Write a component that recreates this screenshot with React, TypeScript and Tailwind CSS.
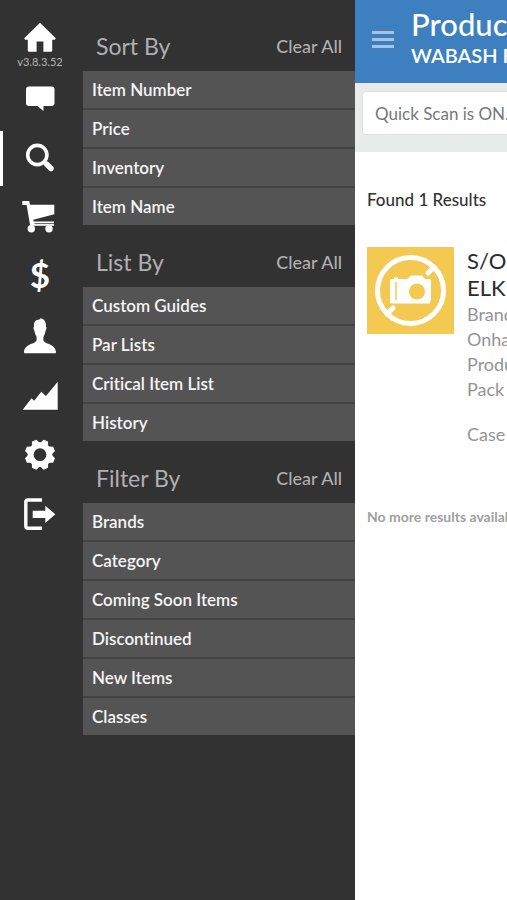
import { useState } from "react";
import type { ReactNode } from "react";

type Secao = {
  titulo: string;
  itens: string[];
}

type ItemMenu = {
  nome: string;
  desenho: ReactNode;
}

const secoes: Secao[] = [
  { titulo: "Sort By", itens: ["Item Number", "Price", "Inventory", "Item Name"] },
  { titulo: "List By", itens: ["Custom Guides", "Par Lists", "Critical Item List", "History"] },
  { titulo: "Filter By", itens: ["Brands", "Category", "Coming Soon Items", "Discontinued", "New Items", "Classes"] },
];

const dentes = [22.5, 67.5, 112.5, 157.5, 202.5, 247.5, 292.5, 337.5];

const menu: ItemMenu[] = [
  {
    nome: "Messages",
    desenho: (
      <>
        <rect x="8" y="17.5" width="28.5" height="19.5" rx="3" />
        <path d="M18.5 36 L20 37.5 L25.5 42 V36 Z" />
      </>
    ),
  },
  {
    nome: "Search",
    desenho: (
      <>
        <circle cx="19.3" cy="26" r="9.6" fill="none" stroke="currentColor" strokeWidth="3.6" />
        <path d="M26 33 L28.5 35.5" stroke="currentColor" strokeWidth="3.6" />
        <path d="M28.5 35 L33 39.5" stroke="currentColor" strokeWidth="5.4" strokeLinecap="round" />
      </>
    ),
  },
  {
    nome: "Cart",
    desenho: (
      <>
        <path d="M4.3 13 H11.2 L12 16.7 H36.3 V26.3 L15.3 31.7 L15.6 33.6 H36 V37.8 H12.2 L8.6 17 H4.3 Z" />
        <path d="M16.5 35.6 H36" stroke="#323232" strokeWidth="0.8" />
        <circle cx="13.3" cy="40.8" r="3.7" />
        <circle cx="31" cy="40.8" r="3.7" />
      </>
    ),
  },
  {
    nome: "Pricing",
    desenho: (
      <text x="22" y="41" textAnchor="middle" fontSize="35" fontWeight="700">$</text>
    ),
  },
  {
    nome: "Customer",
    desenho: (
      <path d="M22.8 12.3 C26.6 13.4 28.2 16 28 20.5 C28.8 21 28.6 23.5 27.6 24.5 C27.2 27.5 26.2 29.5 25.4 31 V34.2 C26.8 38.4 37.8 37.6 38 46.3 Q38 47.3 37 47.3 H7 Q6 47.3 6 46.3 C6.2 37.6 17.2 38.4 18.6 34.2 V31 C17.8 29.5 16.8 27.5 16.4 24.5 C15.4 23.5 15.2 21 16 20.5 C15.8 16 17.6 13.8 21.4 13.6 Z" />
    ),
  },
  {
    nome: "Reports",
    desenho: (
      <path d="M4.7 44.7 L13.5 33.3 L16.2 35.8 L23.3 26.8 L28 31 L39.7 16.7 V44.7 Z" />
    ),
  },
  {
    nome: "Settings",
    desenho: (
      <g transform="translate(22 30.7)">
        <circle r="9.4" fill="none" stroke="currentColor" strokeWidth="6" />
        {dentes.map((d) => (
          <path key={d} d="M-4.2 -11 L-2.4 -15.2 H2.4 L4.2 -11 Z" transform={`rotate(${d})`} />
        ))}
      </g>
    ),
  },
  {
    nome: "Log out",
    desenho: (
      <>
        <path d="M24 17 H10 Q7.8 17 7.8 19.2 V43 Q7.8 45.2 10 45.2 H24" fill="none" stroke="currentColor" strokeWidth="3.4" />
        <path d="M14.7 27.7 H27.3 V22.7 L37.3 31.3 L27.3 40 V35 H14.7 Z" />
      </>
    ),
  },
];

function BarraLateral() {
  const [ativo, setAtivo] = useState("Search");

  return (
    <nav className="w-20 shrink-0 pt-4 text-white">
      <button type="button" aria-label="Home" className="block w-full">
        <svg className="w-11 h-9 mx-auto" viewBox="0 0 44 36" fill="currentColor">
          <path d="M22 6.8 L37.8 22.2 L36.8 23.8 H34.2 V34.5 Q34.2 35.8 33 35.8 H25.4 V25.4 H18.6 V35.8 H11 Q9.8 35.8 9.8 34.5 V23.8 H7.2 L6.2 22.2 Z" />
        </svg>
      </button>
      <p className="mt-[3px] text-center text-[11px] leading-[14px] text-[#b4b4b4]">v3.8.3.52</p>

      {menu.map((item) => (
        <button
          key={item.nome}
          type="button"
          aria-label={item.nome}
          onClick={() => setAtivo(item.nome)}
          className={item.nome === ativo ? "flex items-center w-full h-[60px]" : "flex items-center w-full h-[59px]"}>
          <span className={item.nome === ativo ? "w-[3px] h-[55px] bg-white" : "w-[3px] h-[55px]"}></span>
          <svg className="w-11 h-[59px] ml-[15px]" viewBox="0 0 44 59" fill="currentColor">
            {item.desenho}
          </svg>
        </button>
      ))}
    </nav>
  )
}

function Filtros() {
  return (
    <aside className="flex-1 pt-[9px] pl-[3px]">
      {secoes.map((secao) => (
        <section key={secao.titulo}>
          <div className="flex items-center justify-between h-[62px] pt-3 px-[13px] text-[#b0b0b0]">
            <h2 className="text-[23px]">{secao.titulo}</h2>
            <button type="button" className="text-lg font-medium">Clear All</button>
          </div>

          <ul className="flex flex-col gap-[2px] bg-[#424242]">
            {secao.itens.map((item) => (
              <li key={item}>
                <button type="button" className="block w-full h-[37px] pl-[9px] text-left text-[17px] font-semibold text-[#f5f5f5] bg-[#545454]">
                  {item}
                </button>
              </li>
            ))}
          </ul>
        </section>
      ))}
    </aside>
  )
}

function SemFoto() {
  return (
    <svg className="w-[87px] h-[87px] shrink-0 bg-[#f4c951]" viewBox="0 0 87 87">
      <circle cx="43.5" cy="43.5" r="33" fill="none" stroke="#fff" strokeWidth="5" />
      <path d="M20 67 L26 61 M61 26 L67 20" stroke="#fff" strokeWidth="5" strokeLinecap="round" />
      <path d="M23 33.5 Q23 32 24.5 32 H27 V30.5 H31 V32 H40 L44 28.5 H55 L58 32 H62.5 Q64 32 64 33.5 V52 Q64 53.5 62.5 56.5 H24.5 Q23 56.5 23 55 Z" fill="#fff" />
      <path d="M29 35 V53" stroke="#f4c951" strokeWidth="1.5" />
      <circle cx="50" cy="44.5" r="8" fill="#f4c951" />
    </svg>
  )
}

function Produtos() {
  const [busca, setBusca] = useState("");

  return (
    <main className="flex-1 min-w-0 overflow-hidden whitespace-nowrap bg-white">
      {/* header */}
      <header className="flex h-[83px] pl-[17px] bg-[#3d7fbf] text-white">
        <button type="button" aria-label="Menu" className="flex flex-col gap-1 h-[17px] mt-[31px] shrink-0">
          <span className="w-[22px] h-[3px] bg-[#a5c4e3]"></span>
          <span className="w-[22px] h-[3px] bg-[#a5c4e3]"></span>
          <span className="w-[22px] h-[3px] bg-[#a5c4e3]"></span>
        </button>
        <div className="pl-[17px] pt-[7px]">
          <h1 className="text-[31px] leading-[34px] font-medium">Products</h1>
          <p className="text-xl leading-7 font-semibold">WABASH F</p>
        </div>
      </header>

      {/* busca */}
      <div className="h-[69px] pt-2 pl-[7px] bg-[#e9ebea]">
        <input
          className="w-full h-11 pl-3 text-[17px] bg-white border border-[#dfe1e0] border-r-0 rounded-l-sm text-[#333333] placeholder:text-[#777777]"
          type="text"
          aria-label="Search products"
          placeholder="Quick Scan is ON."
          value={busca}
          onChange={(e) => setBusca(e.target.value)}
        />
      </div>

      <div className="pl-3">
        <p className="pt-[34px] text-[17px] leading-7 font-medium text-[#333333]">Found 1 Results</p>

        <article className="flex gap-[13px] pt-[33px]">
          <SemFoto />
          <div>
            <h2 className="text-[22px] leading-[27px] text-[#2b2b2b]">S/O<br />ELK</h2>
            <div className="pt-px text-lg leading-[25px] text-[#949494]">
              <p>Brand</p>
              <p>Onhand</p>
              <p>Product</p>
              <p>Pack</p>
              <p className="mt-5">Case</p>
            </div>
          </div>
        </article>

        <p className="mt-[60px] text-sm font-bold text-[#a0a0a0]">No more results available</p>
      </div>
    </main>
  )
}

export default function App() {
  return (
    <div className="flex min-h-screen bg-[#323232] font-['Lato',sans-serif] [font-variant-ligatures:none]">
      <div className="flex w-[355px] shrink-0">
        <BarraLateral />
        <Filtros />
      </div>
      <Produtos />
    </div>
  )
}
